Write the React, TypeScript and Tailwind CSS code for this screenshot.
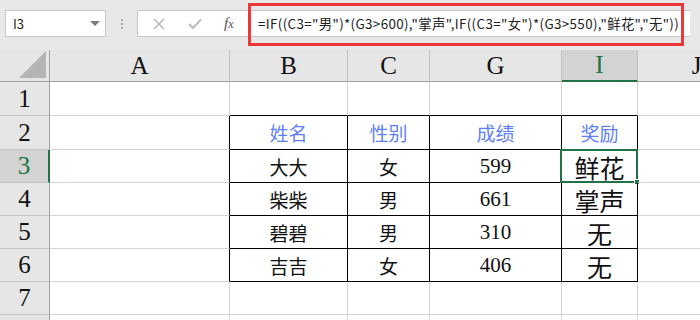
import React from 'react';

const serif = "font-['Liberation_Serif','Times_New_Roman',serif]";
const cjk = "font-['Noto_Sans_CJK_SC','Noto_Sans',sans-serif]";

const cols = ['A', 'B', 'C', 'G', 'I', 'J'];

const rows: (string | number)[][] = [
  ['', '', '', '', '', ''],
  ['', '姓名', '性别', '成绩', '奖励', ''],
  ['', '大大', '女', 599, '鲜花', ''],
  ['', '柴柴', '男', 661, '掌声', ''],
  ['', '碧碧', '男', 310, '无', ''],
  ['', '吉吉', '女', 406, '无', ''],
  ['', '', '', '', '', ''],
  ['', '', '', '', '', ''],
];

const formula = '=IF((C3="男")*(G3>600),"掌声",IF((C3="女")*(G3>550),"鲜花","无"))';

function cellBorders(r: number, c: number) {
  // r: 1-based row number, c: 0-based column index (A = 0)
  const right = r >= 2 && r <= 6 && c <= 4 ? 'border-r-black' : 'border-r-[#d4d4d4]';
  const bottom = r >= 1 && r <= 6 && c >= 1 && c <= 4 ? 'border-b-black' : 'border-b-[#d4d4d4]';
  return `border-r border-b ${right} ${bottom}`;
}

function CellText({ r, c, value }: { r: number; c: number; value: string | number }) {
  if (value === '') return null;
  if (r === 2) {
    return <span className={`${cjk} text-[19px] text-[#5f7ff7]`}>{value}</span>;
  }
  if (typeof value === 'number') {
    return <span className={`${serif} text-[21px] text-[#111]`}>{value}</span>;
  }
  if (c === 4) {
    return <span className={`${cjk} text-[25px] leading-[28px] text-[#111]`}>{value}</span>;
  }
  return <span className={`${cjk} text-[19px] text-[#111]`}>{value}</span>;
}

export default function App() {
  return (
    <div className="w-[700px] h-[320px] overflow-hidden bg-white relative">
      {/* formula bar */}
      <div className="h-[50px] bg-[#e8e8e8] flex items-start pt-[10px]">
        <div className="ml-[5px] w-[101px] h-[27px] bg-white border border-[#c6c6c6] flex items-center justify-between pl-[7px] pr-[5px]">
          <span className={`${cjk} text-[13px] text-[#222]`}>I3</span>
          <span className="w-0 h-0 border-l-[5px] border-r-[5px] border-t-[5px] border-l-transparent border-r-transparent border-t-[#7a7a7a]" />
        </div>
        <div className="w-[31px] h-[27px] flex flex-col items-center justify-center gap-[2px]">
          <span className="w-[2px] h-[2px] bg-[#a8a8a8]" />
          <span className="w-[2px] h-[2px] bg-[#a8a8a8]" />
          <span className="w-[2px] h-[2px] bg-[#a8a8a8]" />
        </div>
        <div className="w-[108px] h-[27px] bg-white border border-[#c6c6c6] border-r-0 flex items-center">
          <svg width="12" height="12" viewBox="0 0 12 12" className="ml-[15px]">
            <path d="M1 1 L11 11 M11 1 L1 11" stroke="#b5b5b5" strokeWidth="1.4" fill="none" />
          </svg>
          <svg width="14" height="12" viewBox="0 0 14 12" className="ml-[23px]">
            <path d="M1 6 L5 10 L13 1.5" stroke="#bdbdbd" strokeWidth="2" fill="none" />
          </svg>
          <span className="ml-[22px] font-['Liberation_Serif',serif] italic text-[15px] text-[#555]">
            f<span className="text-[12px]">x</span>
          </span>
        </div>
        <div className="w-[445px] h-[27px] bg-white border-y border-[#c6c6c6] flex items-center pl-[13px]">
          <span className={`${cjk} text-[13.4px] text-[#222] whitespace-nowrap tracking-[0.35px]`}>{formula}</span>
        </div>
      </div>
      <div className="absolute left-[248px] top-[3px] w-[436px] h-[43px] border-[3px] border-[#ec3838]" />

      {/* sheet grid */}
      <div className="grid grid-cols-[50px_180px_118px_82px_132px_76px_118px] grid-rows-[32px_34px_34px_33px_33px_33px_33px_33px_33px]">
        {/* corner */}
        <div className="bg-[#e6e6e6] border-r border-b border-r-[#a0a0a0] border-b-[#a0a0a0] flex items-end justify-end p-[3px]">
          <svg width="27" height="27" viewBox="0 0 27 27">
            <polygon points="27,0 27,27 0,27" fill="#b4b4b4" />
          </svg>
        </div>
        {cols.map((c) => {
          const sel = c === 'I';
          return (
            <div
              key={c}
              className={`${serif} text-[25px] flex items-center justify-center border-r border-r-[#c2c2c2] ${
                sel
                  ? 'bg-[#d3d3d3] text-[#217346] border-b-2 border-b-[#217346]'
                  : 'bg-[#e6e6e6] text-[#111] border-b border-b-[#a0a0a0]'
              }`}
            >
              {c}
            </div>
          );
        })}

        {rows.map((row, i) => {
          const r = i + 1;
          const sel = r === 3;
          return (
            <React.Fragment key={r}>
              <div
                className={`${serif} text-[25px] flex items-center justify-center border-b border-b-[#c2c2c2] ${
                  sel
                    ? 'bg-[#d3d3d3] text-[#217346] border-r-2 border-r-[#217346]'
                    : 'bg-[#e6e6e6] text-[#111] border-r border-r-[#a0a0a0]'
                }`}
              >
                {r <= 7 ? r : ''}
              </div>
              {row.map((v, c) => (
                <div key={c} className={`relative flex items-center justify-center pt-[2px] ${cellBorders(r, c)}`}>
                  <CellText r={r} c={c} value={v} />
                  {r === 3 && c === 4 && (
                    <div className="absolute left-[-2px] top-[-1px] right-[-1px] bottom-[-1px] border-2 border-[#217346]">
                      <span className="absolute right-[-4px] bottom-[-4px] w-[6px] h-[6px] bg-[#217346] border border-white" />
                    </div>
                  )}
                </div>
              ))}
            </React.Fragment>
          );
        })}
      </div>
    </div>
  );
}
